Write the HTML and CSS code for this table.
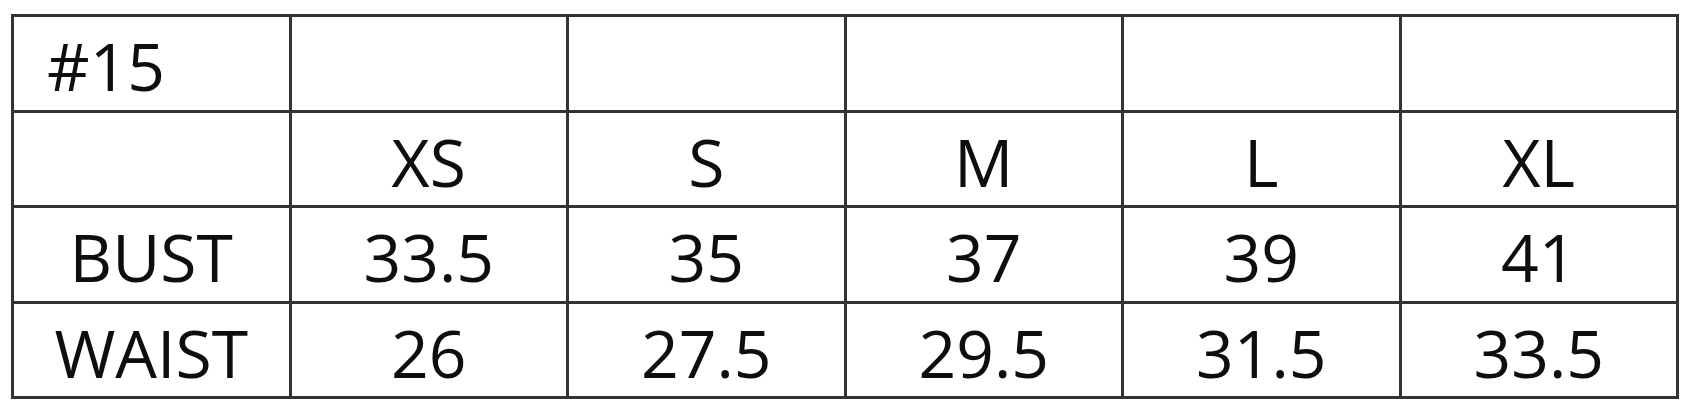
FILE: index.html
```html
<!DOCTYPE html>
<html>
<head>
<meta charset="utf-8">
<link rel="stylesheet" href="styles.css">
</head>
<body>
<div class="chart">
  <div class="cell label">#15</div>
  <div class="cell"></div>
  <div class="cell"></div>
  <div class="cell"></div>
  <div class="cell"></div>
  <div class="cell"></div>

  <div class="cell"></div>
  <div class="cell">XS</div>
  <div class="cell">S</div>
  <div class="cell">M</div>
  <div class="cell">L</div>
  <div class="cell">XL</div>

  <div class="cell">BUST</div>
  <div class="cell">33.5</div>
  <div class="cell">35</div>
  <div class="cell">37</div>
  <div class="cell">39</div>
  <div class="cell">41</div>

  <div class="cell">WAIST</div>
  <div class="cell">26</div>
  <div class="cell">27.5</div>
  <div class="cell">29.5</div>
  <div class="cell">31.5</div>
  <div class="cell">33.5</div>
</div>
</body>
</html>
```
FILE: styles.css
```css
html, body {
  margin: 0;
  padding: 0;
  background: #ffffff;
}
body {
  padding: 14px 0 0 11px;
  font-family: "Open Sans", "Liberation Sans", sans-serif;
}
.chart {
  box-sizing: border-box;
  width: 1668px;
  height: 385px;
  display: grid;
  grid-template-columns: repeat(6, 1fr);
  grid-template-rows: repeat(4, 1fr);
  border-top: 3px solid #333333;
  border-left: 3px solid #333333;
}
.cell {
  border-right: 3px solid #333333;
  border-bottom: 3px solid #333333;
  display: flex;
  align-items: center;
  justify-content: center;
  font-size: 66px;
  color: #0e0e0e;
  padding-top: 4px;
  line-height: 1;
}
.cell.label {
  justify-content: flex-start;
  padding-left: 33px;
}
```
